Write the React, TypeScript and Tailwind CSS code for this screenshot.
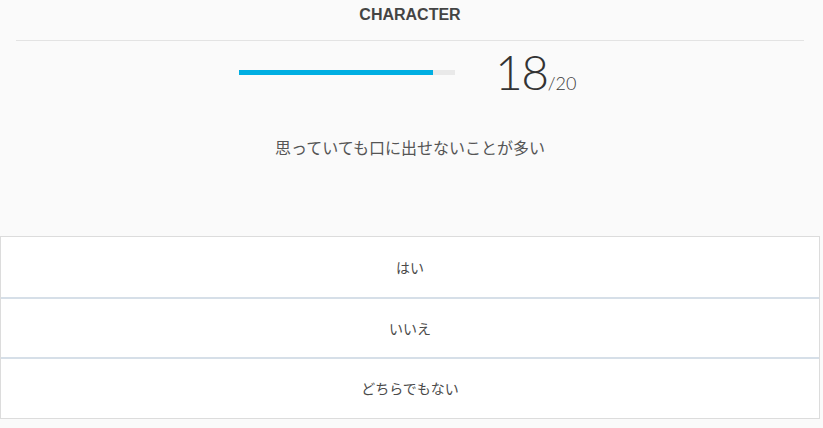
import React from 'react';

const options = ['はい', 'いいえ', 'どちらでもない'];

export default function App() {
  const current = 18;
  const total = 20;
  const pct = (current / total) * 100;

  return (
    <div className="min-h-screen w-full bg-[#fafafa] font-['Liberation_Sans','Noto_Sans_CJK_JP',sans-serif]">
      <div className="w-[820px]">
        {/* Header */}
        <div className="mx-4 h-[41px] border-b border-[#e3e3e3] pt-[5px] text-center">
          <h1 className="text-[16px] font-bold leading-[20px] text-[#444]">CHARACTER</h1>
        </div>

        {/* Progress */}
        <div className="mt-[6px] flex h-[50px] items-center justify-center gap-[42px]">
          <div className="h-[5px] w-[216px] bg-[#e9e9e9]">
            <div className="h-full bg-[#00aee2]" style={{ width: `${pct}%` }} />
          </div>
          <div className="-ml-[2px] flex w-[86px] items-baseline font-['Lato',sans-serif] font-light text-[#333]">
            <span className="text-[48px] leading-[50px] tracking-[-1.5px]">{current}</span>
            <span className="text-[18px] text-[#3a3a3a]">/{total}</span>
          </div>
        </div>

        {/* Question */}
        <p className="mt-[38px] text-center font-['Noto_Sans_CJK_JP',sans-serif] text-[16px] leading-[24px] text-[#555]">
          思っていても口に出せないことが多い
        </p>

        {/* Answers */}
        <div className="mt-[77px] border border-[#dcdcdc] bg-white">
          {options.map((opt, i) => (
            <button
              key={opt}
              className={`flex w-full items-center justify-center font-['Noto_Sans_CJK_JP',sans-serif] text-[14px] text-[#4a4a4a] ${i > 0 ? 'border-t-2 border-[#d6dfe8]' : ''} ${i === 2 ? 'h-[61px]' : 'h-[60px]'}`}
            >
              {opt}
            </button>
          ))}
        </div>
      </div>
    </div>
  );
}
